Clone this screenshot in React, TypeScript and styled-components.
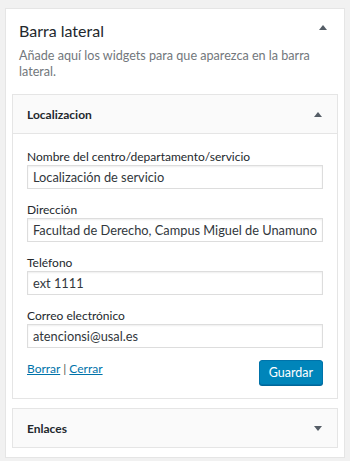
import React from 'react';
import styled, { createGlobalStyle } from 'styled-components';

const GlobalStyle = createGlobalStyle`
  html, body {
    margin: 0;
    padding: 0;
    background: #f1f1f1;
  }
  body {
    font-family: Lato, "Open Sans", sans-serif;
    font-size: 13px;
    color: #23282d;
  }
`;

const Page = styled.div`
  padding: 8px 5px 4px;
`;

const Sidebar = styled.div`
  background: #fff;
  border: 1px solid #e5e5e5;
  padding: 0 6px 9px;
`;

const SidebarHead = styled.div`
  display: flex;
  justify-content: space-between;
  align-items: flex-start;
  padding: 11px 11px 0 7px;
`;

const SidebarTitle = styled.h2`
  margin: 0;
  font-size: 16px;
  font-weight: 400;
  line-height: 22px;
  color: #23282d;
`;

const Description = styled.p`
  margin: 6px 0 14px 7px;
  color: #72777c;
  font-size: 12.6px;
  line-height: 16px;
`;

const Arrow = styled.span<{ $down?: boolean; $top?: number }>`
  width: 0;
  height: 0;
  margin-top: ${({ $top }) => $top ?? 0}px;
  border-left: 4px solid transparent;
  border-right: 4px solid transparent;
  ${({ $down }) => ($down ? 'border-top: 5px solid #555d66;' : 'border-bottom: 5px solid #555d66;')}
`;

const Widget = styled.div`
  border: 1px solid #e5e5e5;
  background: #fff;
  & + & {
    margin-top: 9px;
  }
`;

const WidgetTop = styled.div`
  display: flex;
  justify-content: space-between;
  align-items: center;
  height: 38px;
  padding: 0 15px 0 14px;
  background: #fafafa;
`;

const WidgetTitle = styled.h3`
  margin: 0;
  font-size: 12px;
  font-weight: 700;
`;

const WidgetBody = styled.div`
  border-top: 1px solid #e5e5e5;
  padding: 15px 14px 13px;
  display: flex;
  flex-direction: column;
  gap: 13px;
`;

const Field = styled.div`
  display: flex;
  flex-direction: column;
`;

const Label = styled.label`
  font-size: 12px;
  line-height: 16px;
`;

const Input = styled.input`
  box-sizing: border-box;
  width: 100%;
  height: 24px;
  border: 1px solid #ddd;
  box-shadow: inset 0 1px 2px rgba(0, 0, 0, 0.07);
  padding: 0 5px;
  font-family: inherit;
  font-size: 12.8px;
  color: #32373c;
  outline: none;
`;

const Actions = styled.div`
  display: flex;
  justify-content: space-between;
  align-items: flex-start;
  margin-top: -1px;
`;

const Links = styled.div`
  font-size: 12px;
  color: #555;
  padding-top: 1px;
`;

const Link = styled.a`
  color: #0073aa;
  text-decoration: underline;
`;

const SaveButton = styled.button`
  height: 25px;
  padding: 0 9px;
  background: #0085ba;
  border: 1px solid #0073aa;
  border-radius: 3px;
  box-shadow: 0 1px 0 #006799;
  color: #fff;
  font-family: inherit;
  font-size: 12.5px;
`;

const fields = [
  { label: 'Nombre del centro/departamento/servicio', value: 'Localización de servicio' },
  { label: 'Dirección', value: 'Facultad de Derecho, Campus Miguel de Unamuno' },
  { label: 'Teléfono', value: 'ext 1111' },
  { label: 'Correo electrónico', value: 'atencionsi@usal.es' },
];

const App: React.FC = () => {
  return (
    <Page>
      <GlobalStyle />
      <Sidebar>
        <SidebarHead>
          <SidebarTitle>Barra lateral</SidebarTitle>
          <Arrow $top={5} />
        </SidebarHead>
        <Description>Añade aquí los widgets para que aparezca en la barra lateral.</Description>

        <Widget>
          <WidgetTop>
            <WidgetTitle>Localizacion</WidgetTitle>
            <Arrow />
          </WidgetTop>
          <WidgetBody>
            {fields.map((f) => (
              <Field key={f.label}>
                <Label>{f.label}</Label>
                <Input defaultValue={f.value} />
              </Field>
            ))}
            <Actions>
              <Links>
                <Link href="#">Borrar</Link> | <Link href="#">Cerrar</Link>
              </Links>
              <SaveButton>Guardar</SaveButton>
            </Actions>
          </WidgetBody>
        </Widget>

        <Widget>
          <WidgetTop>
            <WidgetTitle>Enlaces</WidgetTitle>
            <Arrow $down />
          </WidgetTop>
        </Widget>
      </Sidebar>
    </Page>
  );
};

export default App;
